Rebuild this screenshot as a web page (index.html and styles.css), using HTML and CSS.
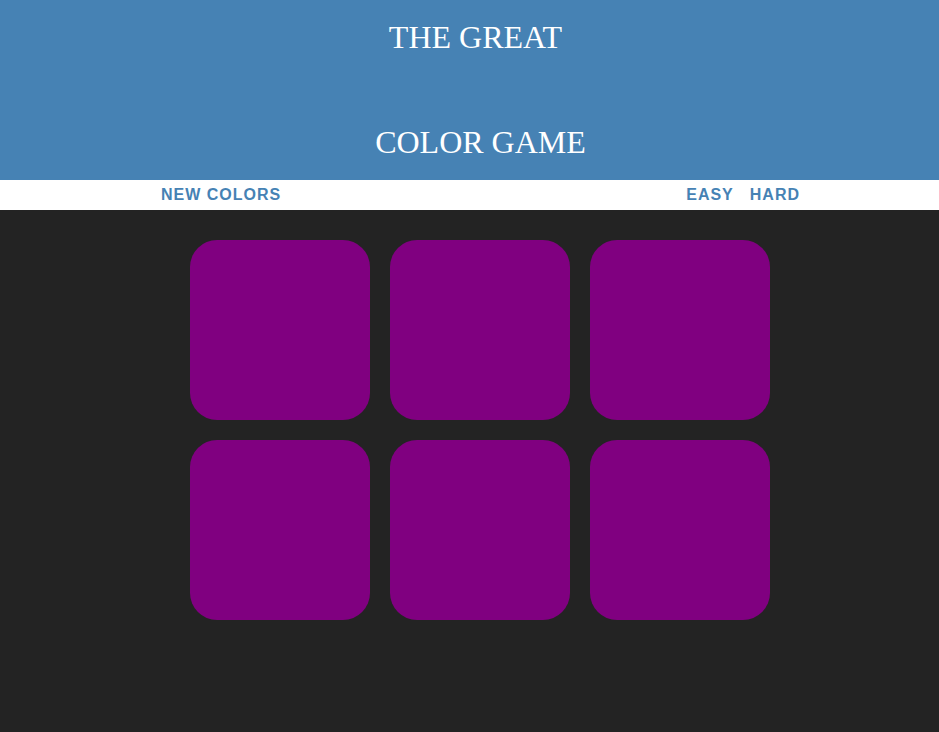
FILE: index.html
```html
<!DOCTYPE html>
<html>
<head>
<meta charset="utf-8">
<link rel="stylesheet" href="styles.css">
</head>
<body>
<h1 class="title">
  <span class="line">The Great</span>
  <span class="line big"></span>
  <span class="line line-last">Color Game</span>
</h1>
<div class="stripe">
  <button class="btn btn-new">New Colors</button>
  <span class="message"></span>
  <button class="btn">Easy</button>
  <button class="btn">Hard</button>
</div>
<div class="board">
  <div class="square"></div>
  <div class="square"></div>
  <div class="square"></div>
  <div class="square"></div>
  <div class="square"></div>
  <div class="square"></div>
</div>
</body>
</html>
```
FILE: styles.css
```css
html, body {
  margin: 0;
  padding: 0;
}
body {
  background: #232323;
  height: 732px;
  overflow: hidden;
}
.title {
  margin: 0;
  padding: 20px 0 20px 12px;
  background: #4682b4;
  color: #ffffff;
  font-family: "Liberation Serif", serif;
  font-weight: normal;
  font-size: 32px;
  text-transform: uppercase;
  text-align: center;
  display: flex;
  flex-direction: column;
}
.line {
  display: block;
  height: 35px;
  line-height: 35px;
}
.line-last {
  padding-left: 10px;
}
.big {
  height: 70px;
}
.stripe {
  background: #ffffff;
  height: 30px;
  display: flex;
  align-items: center;
  justify-content: center;
  padding-left: 22px;
}
.btn {
  border: none;
  background: none;
  padding: 0 6px;
  margin: 0;
  height: 30px;
  font-family: "Liberation Sans", Arial, sans-serif;
  font-weight: 700;
  font-size: 16px;
  letter-spacing: 1px;
  text-transform: uppercase;
  color: #4682b4;
}
.btn + .btn {
  margin-left: 4px;
}
.message {
  width: 393px;
}
.board {
  width: 580px;
  margin: 30px auto 0;
  padding-left: 20px;
  display: grid;
  grid-template-columns: repeat(3, 180px);
  grid-auto-rows: 180px;
  gap: 20px;
}
.square {
  background: #800080;
  border-radius: 15%;
}
```
